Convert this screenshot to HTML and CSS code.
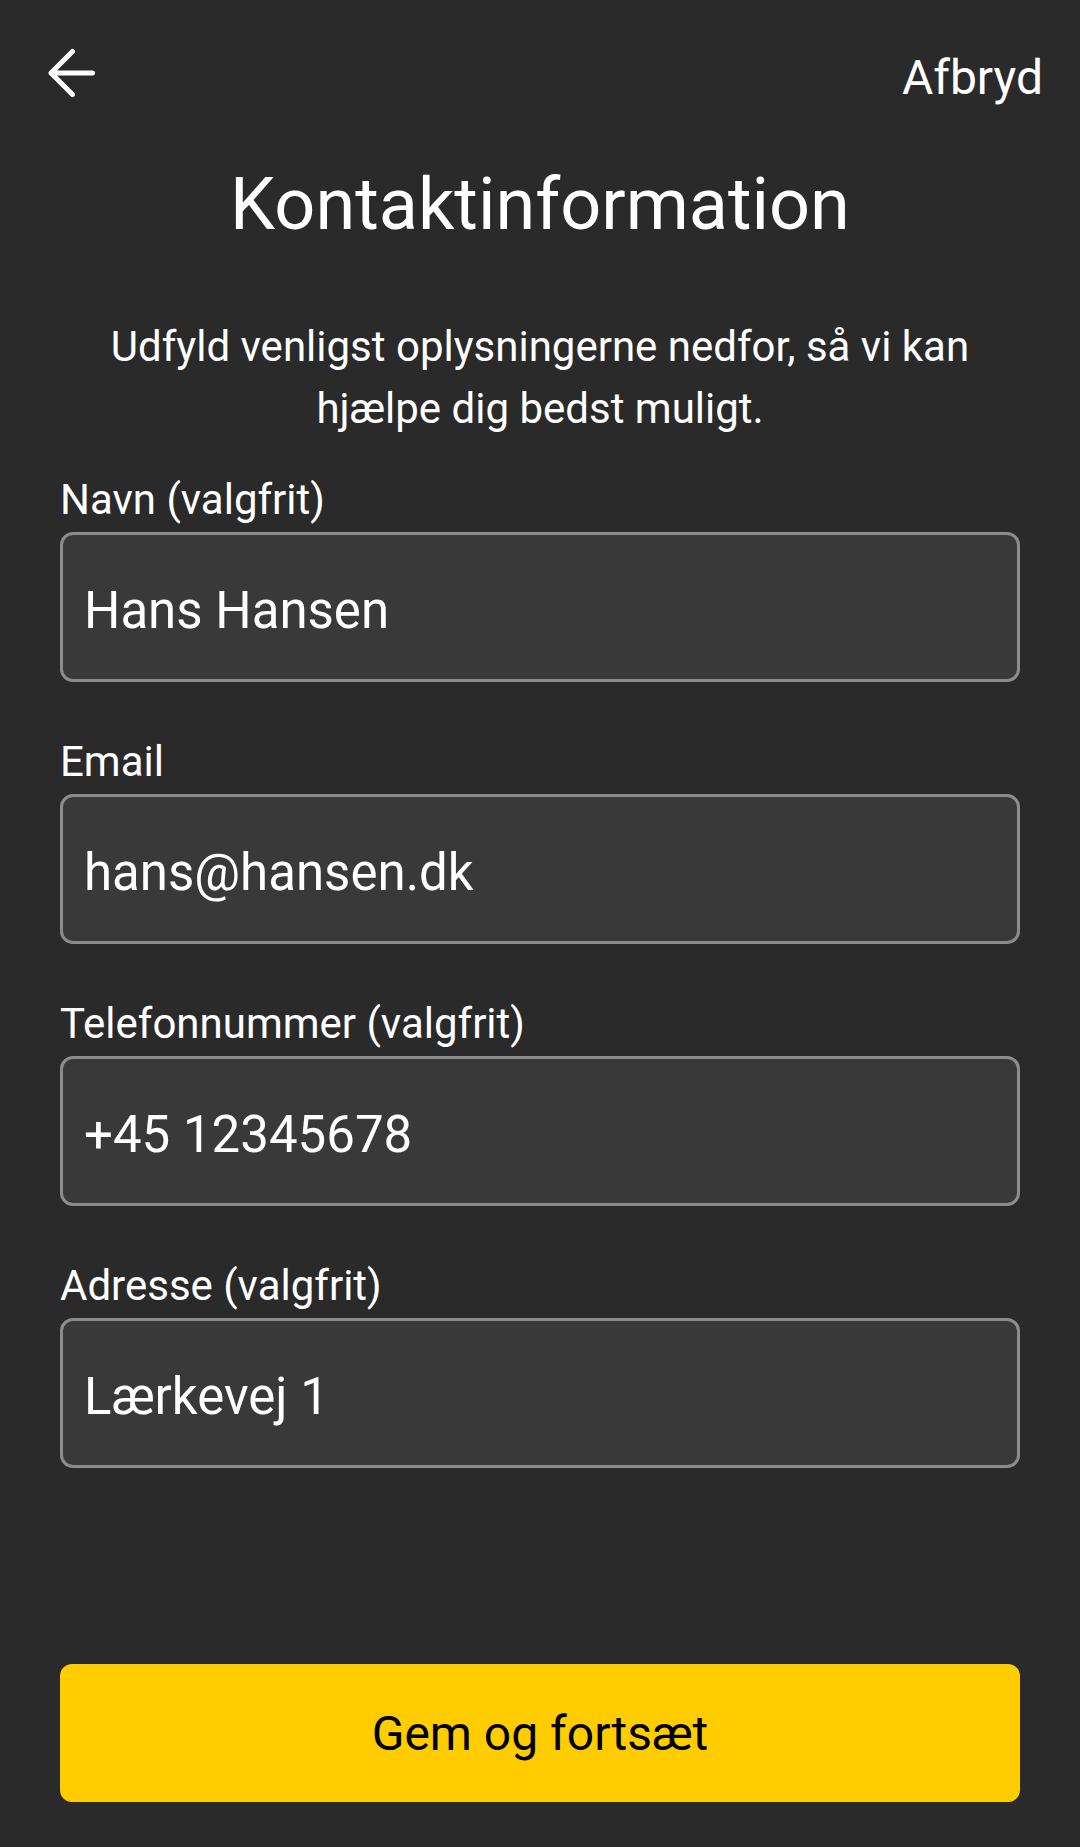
FILE: index.html
```html
<!DOCTYPE html>
<html lang="da">
<head>
<meta charset="utf-8">
<title>Kontaktinformation</title>
<link rel="stylesheet" href="styles.css">
</head>
<body>
<div class="page">
  <header class="topbar">
    <svg class="back" width="50" height="50" viewBox="0 0 50 50" aria-label="Tilbage">
      <path d="M45.5 25 H4 M25.5 3.5 L4 25 L25.5 46.5" fill="none" stroke="#ffffff" stroke-width="5" stroke-linecap="round" stroke-linejoin="round"/>
    </svg>
    <span class="cancel">Afbryd</span>
  </header>

  <h1 class="title">Kontaktinformation</h1>
  <p class="intro">Udfyld venligst oplysningerne nedfor, så vi kan hjælpe dig bedst muligt.</p>

  <div class="form">
    <div class="field">
      <label class="label">Navn (valgfrit)</label>
      <div class="input">Hans Hansen</div>
    </div>
    <div class="field">
      <label class="label">Email</label>
      <div class="input">hans@hansen.dk</div>
    </div>
    <div class="field">
      <label class="label">Telefonnummer (valgfrit)</label>
      <div class="input">+45 12345678</div>
    </div>
    <div class="field">
      <label class="label">Adresse (valgfrit)</label>
      <div class="input">Lærkevej 1</div>
    </div>
  </div>

  <button class="primary">Gem og fortsæt</button>
</div>
</body>
</html>
```

FILE: styles.css
```css
* { box-sizing: border-box; }

html, body {
  margin: 0;
  padding: 0;
  background: #2a2a2a;
}

body {
  font-family: Roboto, "Noto Sans", "Liberation Sans", sans-serif;
  color: #ffffff;
}

.page {
  display: flex;
  flex-direction: column;
  min-height: 1847px;
  padding: 0 60px 45px;
}

.topbar {
  display: flex;
  justify-content: space-between;
  align-items: flex-start;
  margin: 0 -23px 0 -13px;
  padding-top: 48px;
}

.back {
  display: block;
}

.cancel {
  font-size: 48px;
  line-height: 56px;
  margin-top: 2px;
}

.title {
  margin: 57px 0 0;
  font-size: 72px;
  line-height: 84px;
  font-weight: 400;
  text-align: center;
}

.intro {
  margin: 69px 0 0;
  font-size: 42px;
  line-height: 62px;
  text-align: center;
  padding: 0 30px;
}

.form {
  display: flex;
  flex-direction: column;
  gap: 56px;
  margin-top: 36px;
}

.field {
  display: flex;
  flex-direction: column;
  gap: 8px;
}

.label {
  font-size: 42px;
  line-height: 48px;
}

.input {
  height: 150px;
  border: 3px solid #8c8c8c;
  border-radius: 13px;
  background: #393939;
  display: flex;
  align-items: center;
  padding: 8px 21px 0;
  font-size: 51px;
  line-height: 58px;
}

.primary {
  margin-top: auto;
  height: 138px;
  border: none;
  border-radius: 12px;
  background: #ffcc00;
  color: #000000;
  font-family: Roboto, "Noto Sans", "Liberation Sans", sans-serif;
  font-size: 48px;
}
```
